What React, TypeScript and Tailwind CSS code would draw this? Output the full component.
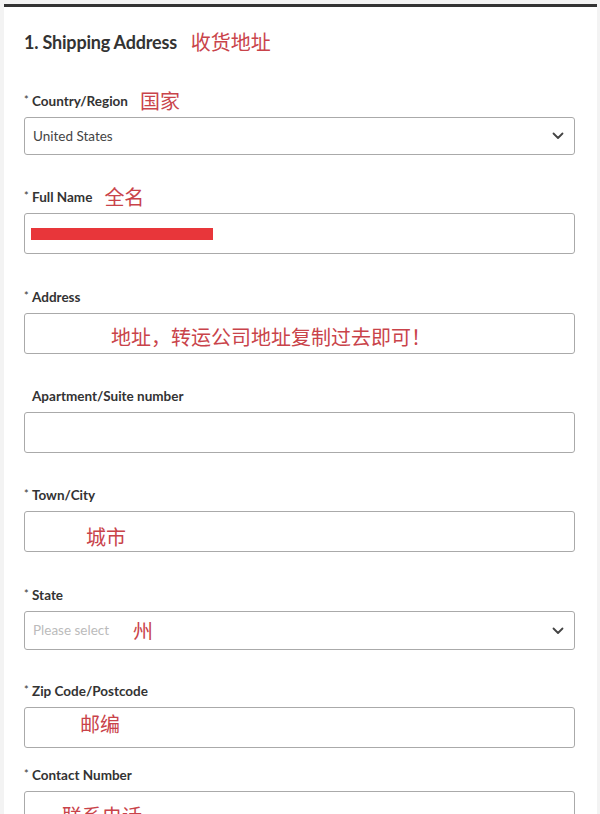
import type { ReactNode } from 'react'

const LATIN = { fontFamily: 'Lato, "Noto Sans", sans-serif' }
const CJK = { fontFamily: '"Noto Sans CJK SC", sans-serif' }

// hand-written notes laid over the form
function Note({ children, className = '' }: { children: ReactNode; className?: string }) {
  return (
    <span className={`text-[20px] leading-6 text-[#c9434a] ${className}`} style={CJK}>
      {children}
    </span>
  )
}

function Chevron() {
  return (
    <svg width="12" height="8" viewBox="0 0 12 8" className="ml-auto mr-[10px] shrink-0">
      <path d="M1.5 1.5 6 6l4.5-4.5" fill="none" stroke="#444" strokeWidth="1.8" strokeLinecap="round" strokeLinejoin="round" />
    </svg>
  )
}

function Label({ text, required = true, note }: { text: string; required?: boolean; note?: string }) {
  return (
    <div className="flex h-4 items-center mb-2">
      <span className="w-2 self-start pt-[1px] text-[11px] leading-3 text-[#333]">{required ? '*' : ''}</span>
      <span className="text-[13.5px] font-bold leading-4 text-[#333]">{text}</span>
      {note && <Note className="ml-3 leading-4">{note}</Note>}
    </div>
  )
}

function Box({ children, className = '' }: { children?: ReactNode; className?: string }) {
  return <div className={`flex w-full rounded-[3px] border border-[#aaa] bg-white ${className}`}>{children}</div>
}

export default function App() {
  return (
    <div className="min-h-screen bg-[#f3f3f3] pt-1 pl-1 pr-[3px]" style={LATIN}>
      <div className="h-[3px] bg-[#333]" />
      <div className="bg-white pl-5 pr-[22px] pt-[23px] pb-10 h-[807px] overflow-hidden">
        <div className="flex h-6 items-center">
          <span className="text-[18px] font-bold leading-6 text-[#333] tracking-[-0.2px]">1. Shipping Address</span>
          <Note className="ml-[14px]">收货地址</Note>
        </div>

        <div className="mt-[39px]">
          <Label text="Country/Region" note="国家" />
          <Box className="h-[38px] items-center">
            <span className="pl-2 text-[13.5px] text-[#444]">United States</span>
            <Chevron />
          </Box>
        </div>

        <div className="mt-[34px]">
          <Label text="Full Name" note="全名" />
          <Box className="h-[41px] items-start">
            <span className="ml-[6px] mt-[14px] h-3 w-[182px] bg-[#e8363a]" />
          </Box>
        </div>

        <div className="mt-[35px]">
          <Label text="Address" />
          <Box className="h-[41px] items-start">
            <Note className="ml-[86px] mt-[11px]">地址，转运公司地址复制过去即可！</Note>
          </Box>
        </div>

        <div className="mt-[34px]">
          <Label text="Apartment/Suite number" required={false} />
          <Box className="h-[41px]" />
        </div>

        <div className="mt-[34px]">
          <Label text="Town/City" />
          <Box className="h-[41px] items-start">
            <Note className="ml-[61px] mt-[13px]">城市</Note>
          </Box>
        </div>

        <div className="mt-[35px]">
          <Label text="State" />
          <Box className="h-[39px] items-center">
            <span className="pl-2 text-[13.5px] text-[#bbb]">Please select</span>
            <Note className="ml-6">州</Note>
            <Chevron />
          </Box>
        </div>

        <div className="mt-[33px]">
          <Label text="Zip Code/Postcode" />
          <Box className="h-[41px] items-start">
            <Note className="ml-[55px] mt-1">邮编</Note>
          </Box>
        </div>

        <div className="mt-[19px]">
          <Label text="Contact Number" />
          <Box className="h-[41px] items-start">
            <Note className="ml-[37px] mt-3">联系电话</Note>
          </Box>
        </div>
      </div>
    </div>
  )
}
